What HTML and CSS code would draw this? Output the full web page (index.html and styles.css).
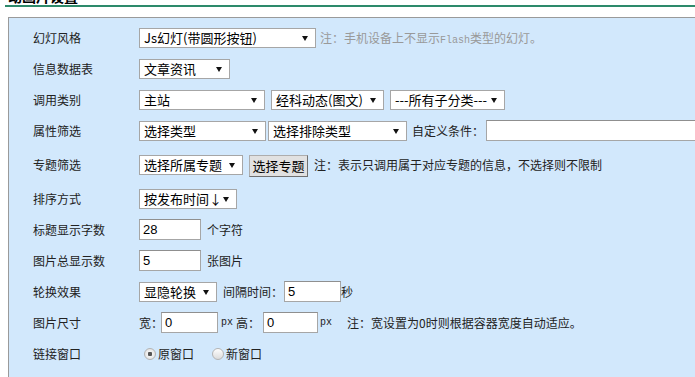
FILE: index.html
```html
<!DOCTYPE html>
<html lang="zh-CN">
<head>
    <meta charset="UTF-8">
    <title>动画片设置</title>
    <link rel="stylesheet" href="styles.css">
</head>
<body>
    <div class="section">
        <h2 class="section-title">动画片设置</h2>

        <div class="panel">
            <div class="row">
                <span class="label">幻灯风格</span>
                <span class="sel w177"><select><option>Js幻灯(带圆形按钮)</option></select></span>
                <span class="note-gray">注：手机设备上不显示<span class="mono">Flash</span>类型的幻灯。</span>
            </div>

            <div class="row">
                <span class="label">信息数据表</span>
                <span class="sel w91"><select><option>文章资讯</option></select></span>
            </div>

            <div class="row">
                <span class="label">调用类别</span>
                <span class="sel w126"><select><option>主站</option></select></span>
                <span class="sel w113 gap6"><select><option>经科动态(图文)</option></select></span>
                <span class="sel w115 gap6"><select><option>---所有子分类---</option></select></span>
            </div>

            <div class="row">
                <span class="label">属性筛选</span>
                <span class="sel w127"><select><option>选择类型</option></select></span>
                <span class="sel w139 gap2"><select><option>选择排除类型</option></select></span>
                <span class="text gap5">自定义条件：</span>
                <input type="text" class="field w260 gap2">
            </div>

            <div class="row row-tall">
                <span class="label">专题筛选</span>
                <span class="sel w104"><select><option>选择所属专题</option></select></span>
                <button type="button" class="btn gap6">选择专题</button>
                <span class="text gap6">注：表示只调用属于对应专题的信息，不选择则不限制</span>
            </div>

            <div class="row">
                <span class="label">排序方式</span>
                <span class="sel w98"><select><option>按发布时间↓</option></select></span>
            </div>

            <div class="row">
                <span class="label">标题显示字数</span>
                <input type="text" class="field w62" value="28">
                <span class="text gap6">个字符</span>
            </div>

            <div class="row">
                <span class="label">图片总显示数</span>
                <input type="text" class="field w62" value="5">
                <span class="text gap6">张图片</span>
            </div>

            <div class="row">
                <span class="label">轮换效果</span>
                <span class="sel w78"><select><option>显隐轮换</option></select></span>
                <span class="text gap6">间隔时间：</span>
                <input type="text" class="field w57 gap1" value="5">
                <span class="text">秒</span>
            </div>

            <div class="row">
                <span class="label">图片尺寸</span>
                <span class="text">宽：</span>
                <input type="text" class="field w57 pull2" value="0">
                <span class="unit">px</span>
                <span class="text gap3">高：</span>
                <input type="text" class="field w55 gap3" value="0">
                <span class="unit unit-tight">px</span>
                <span class="text gap15">注：宽设置为0时则根据容器宽度自动适应。</span>
            </div>

            <div class="row">
                <span class="label">链接窗口</span>
                <label class="radio"><input type="radio" name="target" checked> 原窗口</label>
                <label class="radio"><input type="radio" name="target"> 新窗口</label>
            </div>
        </div>
    </div>
</body>
</html>
```

FILE: styles.css
```css
html, body {
    margin: 0;
    overflow: hidden;
}
body {
    width: 695px;
    height: 377px;
    background: #fff;
    font-family: "Noto Sans CJK SC", "Liberation Sans", sans-serif;
    font-size: 12px;
    color: #222;
}
.section {
    margin-left: 5px;
}
.section-title {
    margin: -11px 0 0 0;
    padding: 0 0 2px 3px;
    height: 14px;
    line-height: 14px;
    font-size: 14px;
    font-weight: bold;
    color: #000;
    border-bottom: 2px solid #2d8a6b;
}
.panel {
    margin: 10px 0 0 3px;
    width: 760px;
    height: 420px;
    padding: 4px 0 0 24px;
    background: #d2e8fc;
    border: 1px solid #9a9a9a;
}
.row {
    display: flex;
    align-items: center;
    height: 31px;
}
.row-tall {
    height: 37px;
}
.label {
    width: 106px;
    flex: none;
    color: #222;
}
.text {
    white-space: nowrap;
}
.note-gray {
    margin-left: 4px;
    color: #999;
    white-space: nowrap;
}
.mono {
    font-family: "Liberation Mono", monospace;
    font-size: 10px;
}
.unit {
    margin-left: 3px;
    font-family: "Liberation Mono", monospace;
    font-size: 10px;
}
.unit-tight {
    margin-left: 2px;
}

/* select boxes */
.sel {
    position: relative;
    display: inline-block;
    flex: none;
    height: 20px;
}
.sel select {
    appearance: none;
    -webkit-appearance: none;
    width: 100%;
    height: 20px;
    margin: 0;
    padding: 0 0 0 4px;
    border: 1px solid #a6a6a6;
    border-radius: 0;
    background: #fff;
    font-family: "Noto Sans CJK SC", "Liberation Sans", sans-serif;
    font-size: 13px;
    line-height: 18px;
    color: #000;
}
.sel::after {
    content: "";
    position: absolute;
    right: 8px;
    top: 8px;
    border-left: 3px solid transparent;
    border-right: 3px solid transparent;
    border-top: 5px solid #111;
}

/* text inputs */
.field {
    flex: none;
    box-sizing: border-box;
    height: 21px;
    margin: 0;
    padding: 0 0 0 3px;
    border: 1px solid #a6a6a6;
    border-top-color: #8f8f8f;
    background: #fff;
    font-family: "Liberation Sans", sans-serif;
    font-size: 13px;
    color: #000;
}

.btn {
    flex: none;
    box-sizing: border-box;
    width: 59px;
    height: 22px;
    margin-top: 2px;
    padding: 0;
    background: #e1e1e1;
    border: 1px solid #adadad;
    border-right-color: #707070;
    border-bottom-color: #707070;
    font-family: "Noto Sans CJK SC", "Liberation Sans", sans-serif;
    font-size: 13px;
    color: #000;
}

/* radios */
.radio {
    display: inline-flex;
    align-items: center;
    margin-left: 5px;
    margin-right: 13px;
    white-space: nowrap;
}
.radio input {
    appearance: none;
    -webkit-appearance: none;
    box-sizing: border-box;
    width: 12px;
    height: 12px;
    margin: 0 2px 0 0;
    border: 1px solid #b4b4b4;
    border-radius: 50%;
    background: linear-gradient(#fdfdfd, #dcdcdc);
}
.radio input:checked {
    background: radial-gradient(circle, #555 0, #555 2px, #f2f2f2 2.5px, #d9d9d9 100%);
}

/* widths and gaps */
.w55 { width: 55px; }
.w57 { width: 57px; }
.w62 { width: 62px; }
.w78 { width: 78px; }
.w91 { width: 91px; }
.w98 { width: 98px; }
.w104 { width: 104px; }
.w113 { width: 113px; }
.w115 { width: 115px; }
.w126 { width: 126px; }
.w127 { width: 127px; }
.w139 { width: 139px; }
.w177 { width: 177px; }
.w260 { width: 260px; }
.pull2 { margin-left: -2px; }
.gap1 { margin-left: 1px; }
.gap2 { margin-left: 2px; }
.gap3 { margin-left: 3px; }
.gap5 { margin-left: 5px; }
.gap6 { margin-left: 6px; }
.gap15 { margin-left: 15px; }
```
